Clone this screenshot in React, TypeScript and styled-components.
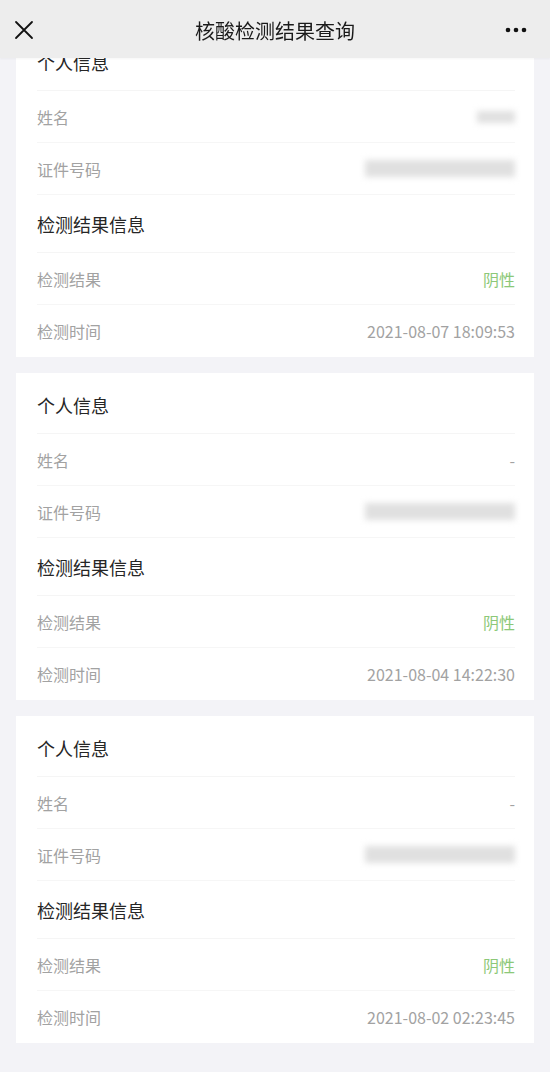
import React from 'react';
import styled, {createGlobalStyle} from 'styled-components';

const GlobalStyle = createGlobalStyle`
  html, body {
    margin: 0;
    padding: 0;
    background: #f3f3f7;
    font-family: "Noto Sans CJK SC", "Noto Sans", sans-serif;
  }
`;

type Record = {
    name: string | null;
    nameBlur?: boolean;
    result: string;
    time: string;
};

const records: Record[] = [
    {name: null, nameBlur: true, result: '阴性', time: '2021-08-07 18:09:53'},
    {name: '-', result: '阴性', time: '2021-08-04 14:22:30'},
    {name: '-', result: '阴性', time: '2021-08-02 02:23:45'},
];

const CloseIcon = () => (
    <svg width="20" height="20" viewBox="0 0 20 20">
        <path d="M2 2 L18 18 M18 2 L2 18" stroke="#111" strokeWidth="1.8" strokeLinecap="round"/>
    </svg>
);

const MoreIcon = () => (
    <svg width="22" height="6" viewBox="0 0 22 6">
        <circle cx="3" cy="3" r="2.3" fill="#111"/>
        <circle cx="11" cy="3" r="2.3" fill="#111"/>
        <circle cx="19" cy="3" r="2.3" fill="#111"/>
    </svg>
);

const RecordCard: React.FC<{rec: Record}> = ({rec}) => (
    <Card>
        <SectionTitle>个人信息</SectionTitle>
        <Row>
            <Label>姓名</Label>
            {rec.nameBlur ? <Blur w={38} h={12}/> : <Value>{rec.name}</Value>}
        </Row>
        <Row>
            <Label>证件号码</Label>
            <Blur w={150} h={17}/>
        </Row>
        <SectionTitle>检测结果信息</SectionTitle>
        <Row>
            <Label>检测结果</Label>
            <Value green>{rec.result}</Value>
        </Row>
        <Row last>
            <Label>检测时间</Label>
            <Value>{rec.time}</Value>
        </Row>
    </Card>
);

export default function App() {
    return (
        <>
            <GlobalStyle/>
            <Header>
                <IconBox><CloseIcon/></IconBox>
                <Title>核酸检测结果查询</Title>
                <IconBox right><MoreIcon/></IconBox>
            </Header>
            <List>
                {records.map((r, i) => <RecordCard rec={r} key={i}/>)}
            </List>
        </>
    );
}

const Header = styled.div`
  position: fixed;
  top: 0;
  left: 0;
  right: 0;
  height: 58px;
  background: #ededed;
  display: flex;
  align-items: center;
  padding: 0 14px;
  box-sizing: border-box;
  box-shadow: 0 1px 2px rgba(0, 0, 0, 0.04);
  z-index: 10;
`;

const IconBox = styled.div<{right?: boolean}>`
  width: 56px;
  display: flex;
  align-items: center;
  justify-content: ${p => p.right ? 'flex-end' : 'flex-start'};
  padding: ${p => p.right ? '2px 9px 0 0' : '2px 0 0 0'};
  box-sizing: border-box;
`;

const Title = styled.div`
  flex: 1;
  text-align: center;
  font-size: 20px;
  color: #1a1a1a;
  padding-top: 2px;
`;

const List = styled.div`
  display: flex;
  flex-direction: column;
  gap: 16px;
  padding: 30px 16px 30px;
`;

const Card = styled.div`
  background: #fff;
  padding: 3px 19px 0 21px;
  display: flex;
  flex-direction: column;
`;

const SectionTitle = styled.div`
  height: 58px;
  display: flex;
  align-items: center;
  font-size: 18px;
  color: #262626;
  border-bottom: 1px solid #f5f5f5;
  box-sizing: border-box;
`;

const Row = styled.div<{last?: boolean}>`
  height: 52px;
  display: flex;
  align-items: center;
  justify-content: space-between;
  border-bottom: ${p => p.last ? 'none' : '1px solid #f6f6f6'};
  box-sizing: border-box;
`;

const Label = styled.span`
  font-size: 16px;
  color: #a2a2a2;
`;

const Value = styled.span<{green?: boolean}>`
  font-size: 16px;
  color: ${p => p.green ? '#8cc878' : '#a2a2a2'};
`;

const Blur = styled.div<{w: number; h: number}>`
  width: ${p => p.w}px;
  height: ${p => p.h}px;
  background: #e0e0e0;
  filter: blur(3px);
`;
